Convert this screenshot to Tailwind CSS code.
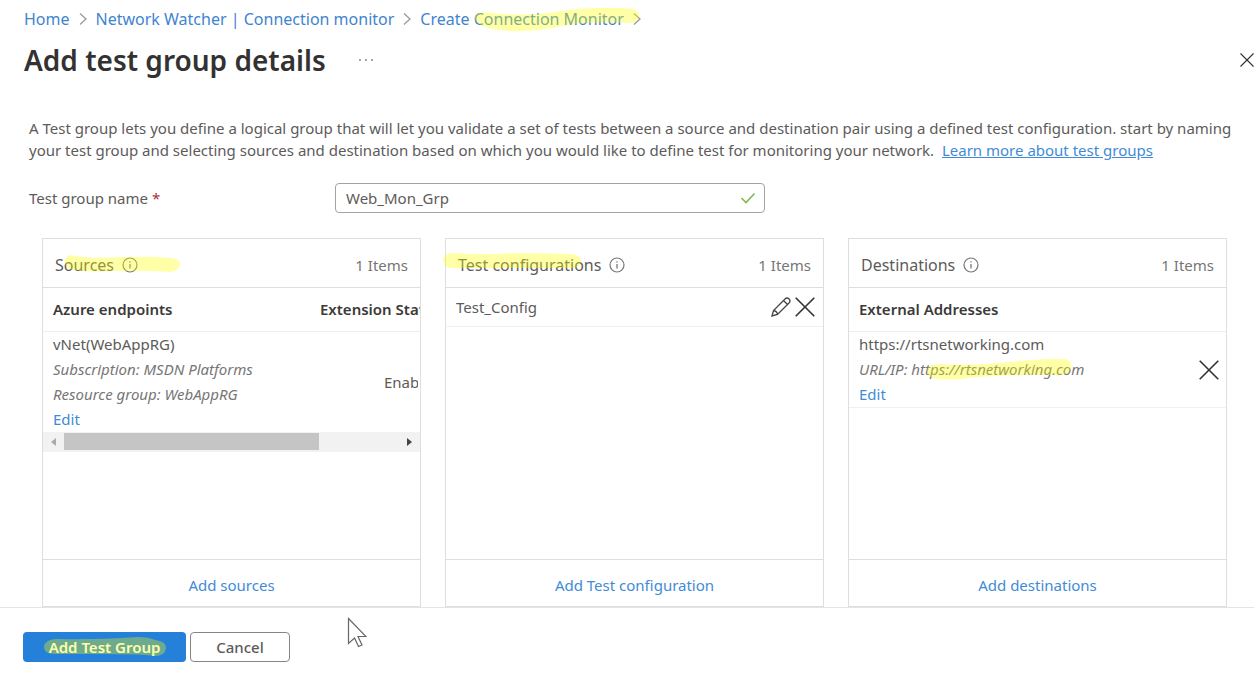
<!DOCTYPE html>
<html lang="en">
<head>
<meta charset="utf-8">
<meta name="viewport" content="width=device-width, initial-scale=1">
<title>Add test group details</title>
<script src="https://cdn.jsdelivr.net/npm/@tailwindcss/browser@4"></script>
</head>
<body class="flex min-h-screen flex-col bg-white font-['Noto_Sans','Open_Sans',sans-serif] text-[15px] leading-[22px] text-[#5c5b5a]">
<svg class="hidden" aria-hidden="true">
  <symbol id="chevron" viewBox="0 0 8 14"><path d="M1 1.500 7 7 1 12.500" fill="none" stroke="#9a9a9a" stroke-width="1.300"/></symbol>
  <symbol id="info" viewBox="0 0 16 16"><circle cx="8" cy="8" r="7" fill="none" stroke="#777" stroke-width="1.200"/><path d="M8 7v4.500M8 4.300v1.300" stroke="#777" stroke-width="1.300"/></symbol>
  <symbol id="cross" viewBox="0 0 20 20"><path d="M.7.7l18.600 18.600M19.300.7.700 19.300" fill="none" stroke="#333" stroke-width="1.600"/></symbol>
</svg>

<header class="px-6 pt-2">
  <nav aria-label="Breadcrumb" class="flex h-[22px] items-center gap-2 text-base leading-[22px] text-[#3f84cf]">
    <a href="#">Home</a>
    <svg class="mx-px h-[14px] w-2"><use href="#chevron"/></svg>
    <a href="#">Network Watcher | Connection monitor</a>
    <svg class="mx-px h-[14px] w-2"><use href="#chevron"/></svg>
    <span class="relative flex items-center gap-2">
      <a href="#">Create Connection Monitor</a>
      <svg class="mx-px h-[14px] w-2"><use href="#chevron"/></svg>
      <svg class="pointer-events-none absolute -top-1 left-[52px] h-[28px] w-[168px]" viewBox="0 0 168 28" aria-hidden="true"><path d="M3 11Q8 7 20 9Q50 12 75 9Q110 3 150 4Q166 4 167 10Q167 18 160 19Q110 17 80 24Q50 30 20 25Q0 20 3 11Z" fill="#ff0" fill-opacity=".34"/></svg>
    </span>
  </nav>
  <div class="mt-[10px] flex items-center justify-between">
    <div class="flex items-center gap-8">
      <h1 class="text-[28px] font-semibold leading-10 text-[#333231]">Add test group details</h1>
      <button type="button" aria-label="More" class="flex h-6 w-4 items-center">
        <svg class="h-1 w-4" viewBox="0 0 16 4" fill="#888"><circle cx="2" cy="2" r="1"/><circle cx="8" cy="2" r="1"/><circle cx="14" cy="2" r="1"/></svg>
      </button>
    </div>
    <button type="button" aria-label="Close" class="-mr-6"><svg class="h-[14px] w-[14px]"><use href="#cross"/></svg></button>
  </div>
</header>

<main class="flex grow flex-col pt-[37px]">
  <p class="pl-[29px] pr-5">A Test group lets you define a logical group that will let you validate a set of tests between a source and destination pair using a defined test configuration. start by naming your test group and selecting sources and destination based on which you would like to define test for monitoring your network. &nbsp;<a href="#" class="text-[#3f8bd6] underline">Learn more about test groups</a></p>

  <div class="mt-[22px] flex items-center pl-[29px]">
    <label for="group-name" class="w-[306px]">Test group name <span class="text-[#b52a35]">*</span></label>
    <div class="flex h-[30px] w-[430px] items-center rounded-sm border border-[#a3a3a3] pl-[10px] pr-2">
      <input id="group-name" type="text" value="Web_Mon_Grp" class="min-w-0 grow outline-none">
      <svg class="h-3 w-4" viewBox="0 0 16 12" aria-hidden="true"><path d="M1.500 6 6 10.500 14.500 1.500" fill="none" stroke="#7fb950" stroke-width="1.600"/></svg>
    </div>
  </div>

  <div class="mt-[25px] grid grow grid-cols-3 gap-6 pl-[42px] pr-[27px]">
    <section class="flex min-w-0 flex-col border border-[#dedede]">
      <div class="flex h-[49px] items-center justify-between border-b border-[#dedede] px-3 pt-1">
        <h2 class="relative flex items-center gap-2 text-base">Sources <svg class="h-4 w-4"><use href="#info"/></svg>
          <svg class="pointer-events-none absolute top-0 left-2 h-5 w-[118px]" viewBox="0 0 118 20" aria-hidden="true"><path d="M2 8Q3 0 12 3Q30 6 60 4Q85 3 110 5Q118 7 117 12Q115 19 106 19Q80 17 50 18Q25 19 10 17Q1 15 2 8Z" fill="#ff0" fill-opacity=".34"/></svg>
        </h2>
        <span class="text-[#767676]">1 Items</span>
      </div>
      <div class="overflow-hidden">
        <table class="w-[480px] table-fixed text-left">
          <thead><tr class="h-[43px] border-b border-[#eee] text-[#3b3a39]"><th class="w-[267px] pl-[10px] font-semibold">Azure endpoints</th><th class="pl-[10px] font-semibold">Extension Status</th></tr></thead>
          <tbody><tr>
            <td class="pl-[10px] leading-[25px]">vNet(WebAppRG)<br><i class="text-[#767676]">Subscription: MSDN Platforms</i><br><i class="text-[#767676]">Resource group: WebAppRG</i><br><a href="#" class="text-[#3f8bd6]">Edit</a></td>
            <td><div class="ml-[74px] w-[34px] overflow-hidden">Enabled</div></td>
          </tr></tbody>
        </table>
      </div>
      <div class="flex h-5 items-center bg-[#f2f2f2] px-2" aria-hidden="true">
        <svg class="h-2 w-[5px]" viewBox="0 0 5 8"><path d="M5 0v8L0 4z" fill="#aaa"/></svg>
        <div class="flex grow px-2"><div class="h-[17px] w-[76%] bg-[#c5c5c5]"></div></div>
        <svg class="h-2 w-[5px]" viewBox="0 0 5 8"><path d="M0 0v8l5-4z" fill="#444"/></svg>
      </div>
      <div class="mt-auto flex h-[47px] items-center justify-center border-t border-[#dedede] pt-1"><button type="button" class="text-[#3f8bd6]">Add sources</button></div>
    </section>

    <section class="flex min-w-0 flex-col border border-[#dedede]">
      <div class="flex h-[49px] items-center justify-between border-b border-[#dedede] px-3 pt-1">
        <h2 class="relative flex items-center gap-2 text-base">Test configurations <svg class="h-4 w-4"><use href="#info"/></svg>
          <svg class="pointer-events-none absolute top-0 -left-4 h-4 w-[140px]" viewBox="0 0 140 16" aria-hidden="true"><path d="M1 7Q2 0 12 0Q40 2 70 0Q100 0 130 1Q139 2 139 8Q139 15 130 15H10Q1 14 1 7Z" fill="#ff0" fill-opacity=".34"/></svg>
        </h2>
        <span class="text-[#767676]">1 Items</span>
      </div>
      <div class="flex h-[39px] items-center justify-between border-b border-[#f0f0f0] pl-[10px] pr-2">
        <span>Test_Config</span>
        <div class="flex items-center gap-1">
          <button type="button" aria-label="Edit"><svg class="h-5 w-5" viewBox="0 0 20 20" fill="none" stroke="#444" stroke-width="1.300"><path d="M1 19l1.500-5.500L14 2q2-2 4 0t0 4L6.500 17.500zM2.500 13.500q3.500.5 4 4M12.500 3.500l4 4"/></svg></button>
          <button type="button" aria-label="Remove"><svg class="h-5 w-5"><use href="#cross"/></svg></button>
        </div>
      </div>
      <div class="mt-auto flex h-[47px] items-center justify-center border-t border-[#dedede] pt-1"><button type="button" class="text-[#3f8bd6]">Add Test configuration</button></div>
    </section>

    <section class="flex min-w-0 flex-col border border-[#dedede]">
      <div class="flex h-[49px] items-center justify-between border-b border-[#dedede] px-3 pt-1">
        <h2 class="flex items-center gap-2 text-base">Destinations <svg class="h-4 w-4"><use href="#info"/></svg></h2>
        <span class="text-[#767676]">1 Items</span>
      </div>
      <table class="w-full text-left">
        <thead><tr class="h-[43px] border-b border-[#eee] text-[#3b3a39]"><th colspan="2" class="pl-[10px] font-semibold">External Addresses</th></tr></thead>
        <tbody><tr class="border-b border-[#f0f0f0]">
          <td class="pl-[10px] leading-[25px]">https://rtsnetworking.com<div class="relative text-[#767676]"><i>URL/IP: https://rtsnetworking.com</i><svg class="pointer-events-none absolute top-px left-[66px] h-[22px] w-[148px]" viewBox="0 0 148 22" aria-hidden="true"><path d="M2 12Q3 6 14 6Q50 8 85 4Q120 0 140 1Q148 3 146 11Q144 17 130 17Q80 16 45 20Q20 23 8 20Q1 18 2 12Z" fill="#ff0" fill-opacity=".34"/></svg></div><a href="#" class="text-[#3f8bd6]">Edit</a></td>
          <td class="w-10 pr-[7px] text-right"><button type="button" aria-label="Remove" class="align-middle"><svg class="h-5 w-5"><use href="#cross"/></svg></button></td>
        </tr></tbody>
      </table>
      <div class="mt-auto flex h-[47px] items-center justify-center border-t border-[#dedede] pt-1"><button type="button" class="text-[#3f8bd6]">Add destinations</button></div>
    </section>
  </div>
</main>

<footer class="relative flex h-[69px] shrink-0 items-center gap-1 border-t border-[#e4e4e4] pl-[23px] pt-[10px]">
  <button type="button" class="relative h-[30px] w-[163px] rounded-sm bg-[#2480d8] font-semibold text-white">Add Test Group
    <svg class="pointer-events-none absolute top-[5px] left-5 h-[19px] w-[124px]" viewBox="0 0 124 19" aria-hidden="true"><path d="M1 10Q2 2 14 2Q50 3 95 0Q105 0 112 3Q123 4 123 11Q122 19 112 19Q100 17 60 17H12Q1 17 1 10Z" fill="#ff0" fill-opacity=".34"/></svg>
  </button>
  <button type="button" class="h-[30px] w-[100px] rounded-sm border border-[#858585] font-medium">Cancel</button>
  <svg class="pointer-events-none absolute top-[9px] left-[347px] h-[31px] w-5" viewBox="0 0 20 31" aria-hidden="true"><path d="M1.500 1.500v25l6-5.500 4 8.500 3.500-1.500-4-8.500h8z" fill="#fff" stroke="#666" stroke-width="1.200"/></svg>
</footer>
</body>
</html>
